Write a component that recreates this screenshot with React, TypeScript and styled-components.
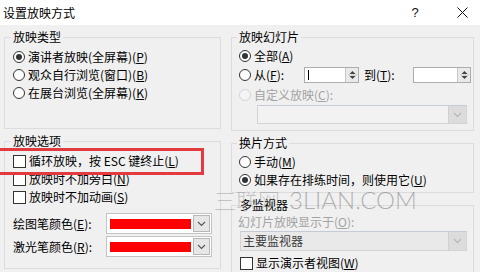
import React from "react";
import styled, { createGlobalStyle } from "styled-components";

const GlobalStyle = createGlobalStyle`
  html, body {
    margin: 0;
    padding: 0;
  }
  body {
    background: #f0f0f0;
    font-family: "Noto Sans CJK SC", "Noto Sans", sans-serif;
    font-size: 12px;
    color: #000;
  }
`;

export default function App() {
  return (
    <Dialog>
      <GlobalStyle />
      <TitleBar>
        <Title>设置放映方式</Title>
        <HelpButton>?</HelpButton>
        <CloseButton>
          <svg width="11" height="11" viewBox="0 0 11 11">
            <path d="M0.5 0.5 L10.5 10.5 M10.5 0.5 L0.5 10.5" stroke="#111" strokeWidth="1" />
          </svg>
        </CloseButton>
      </TitleBar>

      <Body>
        <Column $w={217}>
          <Group $h={100}>
            <Legend>放映类型</Legend>
            <Row>
              <Radio $checked />
              <Text>演讲者放映(全屏幕)(<Key>P</Key>)</Text>
            </Row>
            <Row>
              <Radio />
              <Text>观众自行浏览(窗口)(<Key>B</Key>)</Text>
            </Row>
            <Row>
              <Radio />
              <Text>在展台浏览(全屏幕)(<Key>K</Key>)</Text>
            </Row>
          </Group>

          <Group $h={136}>
            <Legend>放映选项</Legend>
            <Row>
              <Check />
              <Text>循环放映，按 ESC 键终止(<Key>L</Key>)</Text>
            </Row>
            <Row>
              <Check />
              <Text>放映时不加旁白(<Key>N</Key>)</Text>
            </Row>
            <Row>
              <Check />
              <Text>放映时不加动画(<Key>S</Key>)</Text>
            </Row>
            <Row $h={21} $mt={7} $gap={0}>
              <Text $w={93}>绘图笔颜色(<Key>E</Key>):</Text>
              <ColorCombo />
            </Row>
            <Row $h={21} $mt={2} $gap={0}>
              <Text $w={93}>激光笔颜色(<Key>R</Key>):</Text>
              <ColorCombo />
            </Row>
          </Group>
        </Column>

        <Column $w={243}>
          <Group $h={102} $pl={7} $pt={2}>
            <Legend>放映幻灯片</Legend>
            <Row>
              <Radio $checked />
              <Text>全部(<Key>A</Key>)</Text>
            </Row>
            <Row $h={20}>
              <Radio />
              <Text $w={47}>从(<Key>F</Key>):</Text>
              <SpinBox $w={55} $caret />
              <Text $w={46} $ml={2}>到(<Key>T</Key>):</Text>
              <SpinBox $w={58} />
            </Row>
            <Row $h={20}>
              <Radio $disabled />
              <Text $disabled>自定义放映(<Key>C</Key>):</Text>
            </Row>
            <Row $h={19} $gap={0}>
              <Combo $w={211} $ml={18} />
            </Row>
          </Group>

          <Group $h={58} $pl={7} $pt={2}>
            <Legend>换片方式</Legend>
            <Row>
              <Radio />
              <Text>手动(<Key>M</Key>)</Text>
            </Row>
            <Row>
              <Radio $checked />
              <Text>如果存在排练时间，则使用它(<Key>U</Key>)</Text>
            </Row>
          </Group>

          <Group $h={77} $pl={8} $pt={0}>
            <Legend>多监视器</Legend>
            <Row $gap={0}>
              <Text $disabled $ml={-2}>幻灯片放映显示于(<Key>O</Key>):</Text>
            </Row>
            <Row $h={20} $gap={0}>
              <Combo $w={228} $value="主要监视器" />
            </Row>
            <Row $mt={3}>
              <Check />
              <Text>显示演示者视图(<Key>W</Key>)</Text>
            </Row>
          </Group>
        </Column>
      </Body>

      <Highlight />
      <Watermark>
        <WatermarkCjk>三联网</WatermarkCjk>
        <WatermarkLatin>3LIAN.COM</WatermarkLatin>
      </Watermark>
    </Dialog>
  );
}

function Radio({ $checked, $disabled }: { $checked?: boolean; $disabled?: boolean }) {
  return <RadioCircle $checked={$checked} $disabled={$disabled} />;
}

function SpinBox({ $w, $caret }: { $w: number; $caret?: boolean }) {
  return (
    <SpinFrame $w={$w}>
      <SpinField>{$caret && <Caret />}</SpinField>
      <SpinButtons>
        <svg width="9" height="12" viewBox="0 0 9 12">
          <path d="M4.5 2 L7.5 5 L1.5 5 Z" fill="#444" />
          <path d="M1.5 7 L7.5 7 L4.5 10 Z" fill="#444" />
          <line x1="0" y1="6" x2="9" y2="6" stroke="#c8c8c8" strokeWidth="1" />
        </svg>
      </SpinButtons>
    </SpinFrame>
  );
}

function Chevron({ color }: { color: string }) {
  return (
    <svg width="9" height="6" viewBox="0 0 9 6">
      <path d="M1 1 L4.5 4.5 L8 1" stroke={color} strokeWidth="1.1" fill="none" />
    </svg>
  );
}

function ColorCombo() {
  return (
    <ColorFrame>
      <Swatch />
      <ColorDrop>
        <Chevron color="#555" />
      </ColorDrop>
    </ColorFrame>
  );
}

function Combo({ $w, $ml, $value }: { $w: number; $ml?: number; $value?: string }) {
  return (
    <ComboFrame $w={$w} $ml={$ml} $filled={!!$value}>
      <ComboText>{$value}</ComboText>
      <ComboDrop>
        <Chevron color="#b5b5b5" />
      </ComboDrop>
    </ComboFrame>
  );
}

const Dialog = styled.div`
  position: relative;
  width: 480px;
  height: 272px;
  overflow: hidden;
  background: #f0f0f0;
`;

const TitleBar = styled.div`
  height: 25px;
  background: #fff;
  display: flex;
  align-items: center;
  padding-left: 3px;
`;

const Title = styled.div`
  flex: 1;
  font-size: 12px;
  line-height: 25px;
  color: #000;
`;

const HelpButton = styled.div`
  width: 58px;
  text-align: center;
  font-family: "Liberation Sans", Arial, sans-serif;
  font-size: 13px;
  color: #111;
`;

const CloseButton = styled.div`
  width: 36px;
  display: flex;
  justify-content: center;
  align-items: center;
`;

const Body = styled.div`
  display: flex;
  gap: 10px;
  padding: 4px 0 0 4px;
`;

const Column = styled.div<{ $w: number }>`
  width: ${(p) => p.$w}px;
  display: flex;
  flex-direction: column;
  gap: 4px;
`;

const Group = styled.fieldset<{ $h: number; $pl?: number; $pt?: number }>`
  margin: 0;
  padding: ${(p) => p.$pt ?? 3}px 6px 0 ${(p) => p.$pl ?? 8}px;
  border: 1px solid #dcdcdc;
  height: ${(p) => p.$h}px;
  box-sizing: border-box;
  min-width: 0;
`;

const Legend = styled.legend`
  margin-left: -2px;
  padding: 0 2px;
  font-size: 12px;
  line-height: 16px;
  color: #000;
`;

const Row = styled.div<{ $h?: number; $mt?: number; $gap?: number }>`
  display: flex;
  align-items: center;
  height: ${(p) => p.$h ?? 18}px;
  margin-top: ${(p) => p.$mt ?? 0}px;
  gap: ${(p) => p.$gap ?? 3}px;
  white-space: nowrap;
`;

const Text = styled.span<{ $w?: number; $ml?: number; $disabled?: boolean }>`
  font-size: 12px;
  line-height: 16px;
  color: ${(p) => (p.$disabled ? "#a3a3a3" : "#000")};
  ${(p) => (p.$w ? `width: ${p.$w}px; flex: none;` : "")}
  margin-left: ${(p) => p.$ml ?? 0}px;
`;

const Key = styled.u`
  text-underline-offset: 1px;
`;

const RadioCircle = styled.span<{ $checked?: boolean; $disabled?: boolean }>`
  flex: none;
  width: 12px;
  height: 12px;
  box-sizing: border-box;
  border-radius: 50%;
  border: 1px solid ${(p) => (p.$disabled ? "#d4d4d4" : "#333")};
  background: ${(p) => (p.$disabled ? "#f4f4f4" : "#fff")};
  display: flex;
  align-items: center;
  justify-content: center;
  &::after {
    content: "";
    width: 6px;
    height: 6px;
    border-radius: 50%;
    background: #333;
    display: ${(p) => (p.$checked ? "block" : "none")};
  }
`;

const Check = styled.span`
  flex: none;
  width: 13px;
  height: 13px;
  box-sizing: border-box;
  border: 1px solid #333;
  background: #fff;
`;

const SpinFrame = styled.div<{ $w: number }>`
  flex: none;
  width: ${(p) => p.$w}px;
  height: 16px;
  box-sizing: border-box;
  border: 1px solid #adadad;
  background: #fff;
  display: flex;
`;

const SpinField = styled.div`
  flex: 1;
  display: flex;
  align-items: center;
  padding-left: 3px;
`;

const Caret = styled.span`
  width: 1px;
  height: 10px;
  background: #000;
`;

const SpinButtons = styled.div`
  width: 12px;
  border-left: 1px solid #c8c8c8;
  background: #e9e9e9;
  display: flex;
  align-items: center;
  justify-content: center;
`;

const ColorFrame = styled.div`
  width: 106px;
  height: 21px;
  box-sizing: border-box;
  border: 1px solid #c4c4c4;
  background: #fff;
  display: flex;
  align-items: center;
  padding: 0 1px 0 3px;
  gap: 2px;
`;

const Swatch = styled.div`
  flex: 1;
  height: 10px;
  background: #f00;
`;

const ColorDrop = styled.div`
  width: 17px;
  height: 17px;
  box-sizing: border-box;
  border: 1px solid #b8b8b8;
  background: #e6e6e6;
  display: flex;
  align-items: center;
  justify-content: center;
`;

const ComboFrame = styled.div<{ $w: number; $ml?: number; $filled?: boolean }>`
  width: ${(p) => p.$w}px;
  height: 100%;
  margin-left: ${(p) => p.$ml ?? 0}px;
  box-sizing: border-box;
  border: 1px solid #d3d3d3;
  border-top-color: #c5cbd3;
  background: ${(p) => (p.$filled ? "#e9e9e9" : "#f2f2f2")};
  display: flex;
`;

const ComboText = styled.div`
  flex: 1;
  padding-left: 2px;
  font-size: 12px;
  line-height: 18px;
  color: #3c3c3c;
`;

const ComboDrop = styled.div`
  width: 17px;
  background: #dcdcdc;
  border-left: 1px solid #d0d0d0;
  display: flex;
  align-items: center;
  justify-content: center;
`;

const Highlight = styled.div`
  position: absolute;
  left: -6px;
  top: 148px;
  width: 210px;
  height: 27px;
  box-sizing: border-box;
  border: 3px solid #e33a40;
  pointer-events: none;
`;

const Watermark = styled.div`
  position: absolute;
  left: 214px;
  top: 186px;
  display: flex;
  align-items: baseline;
  gap: 9px;
  white-space: nowrap;
  pointer-events: none;
`;

const WatermarkCjk = styled.span`
  font-family: "Noto Sans CJK SC", sans-serif;
  font-weight: 300;
  font-size: 22px;
  line-height: 26px;
  color: rgba(110, 110, 110, 0.35);
`;

const WatermarkLatin = styled.span`
  font-family: Lato, "Open Sans", sans-serif;
  font-weight: 300;
  font-size: 24px;
  line-height: 26px;
  color: rgba(110, 110, 110, 0.5);
`;
